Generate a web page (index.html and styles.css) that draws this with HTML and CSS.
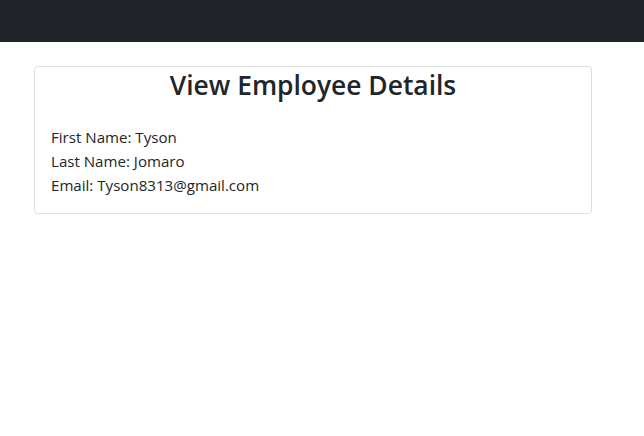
FILE: index.html
```html
<!DOCTYPE html>
<html lang="en">
<head>
<meta charset="utf-8">
<title>View Employee</title>
<link rel="stylesheet" href="styles.css">
</head>
<body>
<header class="navbar"></header>
<main class="page">
  <section class="card">
    <h2 class="card-title">View Employee Details</h2>
    <div class="card-body">
      <div class="row">First Name: Tyson</div>
      <div class="row">Last Name: Jomaro</div>
      <div class="row">Email: Tyson8313@gmail.com</div>
    </div>
  </section>
</main>
</body>
</html>
```
FILE: styles.css
```css
* { box-sizing: border-box; }
html, body { margin: 0; padding: 0; }
body {
  font-family: "Open Sans", "Noto Sans", sans-serif;
  font-size: 15.1px;
  line-height: 24px;
  color: #212529;
  background: #fff;
}
.navbar {
  height: 42px;
  background: #212529;
}
.page {
  padding: 24px 52px 0 34px;
}
.card {
  width: 558px;
  border: 1px solid #dfdfdf;
  border-radius: 4px;
  padding: 0 16px 16px;
}
.card-title {
  margin: 0;
  text-align: center;
  font-size: 26.4px;
  font-weight: 600;
  line-height: 36px;
}
.card-body {
  padding-top: 22px;
}
```
